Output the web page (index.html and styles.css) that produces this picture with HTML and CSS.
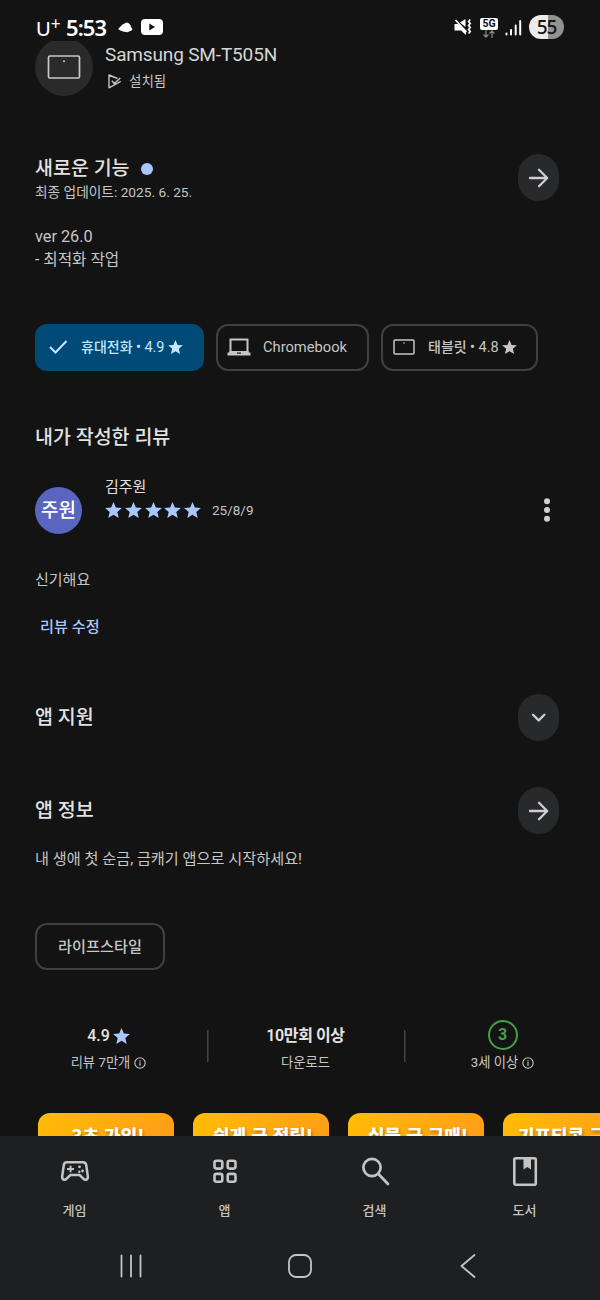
FILE: index.html
```html
<!DOCTYPE html>
<html lang="ko">
<head>
<meta charset="utf-8">
<title>앱 세부정보</title>
<link rel="stylesheet" href="styles.css">
</head>
<body>
<svg class="defs" width="0" height="0">
  <symbol id="star" viewBox="2 2 20 19"><path fill="currentColor" d="M12 17.270L18.180 21l-1.640-7.030L22 9.240l-7.190-.61L12 2 9.190 8.630 2 9.240l5.460 4.730L5.820 21z"/></symbol>
  <symbol id="arrow" viewBox="0 0 24 24"><path fill="none" stroke="currentColor" stroke-width="2.300" stroke-linecap="round" stroke-linejoin="round" d="M3 12h17M12 3.800l8.200 8.200-8.200 8.200"/></symbol>
  <symbol id="info" viewBox="0 0 12 12"><circle cx="6" cy="6" r="5.200" fill="none" stroke="currentColor" stroke-width="1.100"/><path stroke="currentColor" stroke-width="1.200" d="M6 5.300v3.400M6 3.200v1.200"/></symbol>
</svg>

<header class="status">
  <div class="status-left">
    <span class="carrier">U<sup>+</sup></span>
    <span class="clock">5:53</span>
    <svg class="ico-cloud" width="17" height="13" viewBox="0 0 18 14"><path fill="#fff" d="M1 8.500L5.500 4 10 1.500c3 .5 4.500 2 5 5l1.500 2.500c-1 2.200-3.500 1.800-5 3.200-3-.7-7.500-1-10.500-3.700z"/></svg>
    <svg width="22" height="16" viewBox="0 0 22 16"><rect width="22" height="16" rx="4" fill="#fff"/><path fill="#151515" d="M8.300 4.600v6.800L14 8z"/></svg>
  </div>
  <div class="status-right">
    <svg width="18" height="18" viewBox="0 0 18 18"><path fill="#fff" d="M.5 6H4l2 1 6 6v4l-5-4.500H.5zM6 4.500L11.500 1v8z"/><path fill="none" stroke="#fff" stroke-width="1.700" d="M1.500 2l11 12M16.200 1.500l-1.600 2 1.600 2-1.600 2 1.600 2-1.600 2 1.600 2-1.600 2"/></svg>
    <div class="net"><b>5G</b><svg width="12" height="8" viewBox="0 0 12 8"><path fill="none" stroke="#858585" stroke-width="1.300" d="M3 0v7M.5 4.500L3 7l2.500-2.500M9 8V1M6.500 3.500L9 1l2.500 2.500"/></svg></div>
    <svg class="ico-signal" width="17" height="17" viewBox="0 0 17 17"><path stroke="#fff" stroke-width="2" stroke-linecap="round" d="M1.500 14.500v1M6 11v4.500M10.700 6.500v9M15.200 2v13.500"/></svg>
    <span class="battery">55</span>
  </div>
</header>

<main class="page">
  <section class="device">
    <div class="device-icon"><svg width="34" height="24" viewBox="0 0 34 24"><rect x="1.500" y="1" width="31" height="22" rx="1.500" fill="none" stroke="#c8c8c8" stroke-width="1.700"/><circle cx="17" cy="6.300" r="1" fill="#c8c8c8"/></svg></div>
    <div>
      <div class="device-name">Samsung SM-T505N</div>
      <div class="device-state"><svg width="14" height="15" viewBox="0 0 14 15"><path fill="none" stroke="#c4c4c4" stroke-width="1.400" stroke-linejoin="round" d="M9.500 4.500L1 1v12.800L12.700 7.300M3.800 6.700l2.500 2.800 6-5.500"/></svg>설치됨</div>
    </div>
  </section>

  <section class="row news">
    <div>
      <h2 class="news-title">새로운 기능<i class="dot"></i></h2>
      <p class="updated">최종 업데이트: 2025. 6. 25.</p>
    </div>
    <button class="round"><svg width="24" height="24"><use href="#arrow"/></svg></button>
  </section>
  <p class="changes"><span class="version">ver 26.0</span><br>- 최적화 작업</p>

  <nav class="chips">
    <div class="chip chip-on"><svg class="ico-check" width="19" height="16" viewBox="0 0 19 16"><path fill="none" stroke="currentColor" stroke-width="2" d="M1 8l5.500 5.500L17.500 2"/></svg><span>휴대전화 • <i>4.9</i></span><svg width="15" height="14"><use href="#star"/></svg></div>
    <div class="chip chip-book"><svg width="24" height="18" viewBox="0 0 24 18"><path fill="none" stroke="currentColor" stroke-width="2" d="M3.500 15V1.500h17V15"/><path fill="currentColor" d="M.5 14.500h23v3H.5zM2.500 13h19v2h-19z"/><path fill="#131313" d="M10 14.500h4v1.200h-4z"/></svg><span>Chromebook</span></div>
    <div class="chip chip-tablet"><svg width="22" height="16" viewBox="0 0 22 16"><rect x="1" y="1" width="20" height="14" rx="1" fill="none" stroke="currentColor" stroke-width="1.500"/><circle cx="11" cy="4" r=".8" fill="currentColor"/></svg><span>태블릿 • <i>4.8</i></span><svg width="15" height="14"><use href="#star"/></svg></div>
  </nav>

  <h2 class="mine">내가 작성한 리뷰</h2>
  <section class="review">
    <div class="avatar">주원</div>
    <div class="review-meta">
      <div class="reviewer">김주원</div>
      <div class="stars">
        <svg width="17" height="16"><use href="#star"/></svg><svg width="17" height="16"><use href="#star"/></svg><svg width="17" height="16"><use href="#star"/></svg><svg width="17" height="16"><use href="#star"/></svg><svg width="17" height="16"><use href="#star"/></svg>
        <time>25/8/9</time>
      </div>
    </div>
    <svg class="more" width="8" height="24" viewBox="0 0 8 24"><g fill="#d0d0d0"><circle cx="4" cy="3.200" r="3"/><circle cx="4" cy="12" r="3"/><circle cx="4" cy="20.800" r="3"/></g></svg>
  </section>
  <p class="comment">신기해요</p>
  <a class="edit">리뷰 수정</a>

  <section class="row support">
    <h2>앱 지원</h2>
    <button class="round"><svg width="16" height="10" viewBox="0 0 16 10"><path fill="none" stroke="currentColor" stroke-width="2.300" stroke-linecap="round" stroke-linejoin="round" d="M2 1.700L7.700 7.400 13.400 1.700"/></svg></button>
  </section>
  <section class="row about">
    <h2>앱 정보</h2>
    <button class="round"><svg width="24" height="24"><use href="#arrow"/></svg></button>
  </section>
  <p class="summary">내 생애 첫 순금, 금캐기 앱으로 시작하세요!</p>
  <div class="tag">라이프스타일</div>

  <section class="stats">
    <div class="stat"><div class="stat-top"><span>4.9</span><svg width="17" height="16"><use href="#star"/></svg></div><div class="stat-label">리뷰 7만개<svg width="12" height="12"><use href="#info"/></svg></div></div>
    <div class="stat"><div class="stat-top stat-count">10만회 이상</div><div class="stat-label">다운로드</div></div>
    <div class="stat"><div class="stat-top"><b class="age">3</b></div><div class="stat-label">3세 이상<svg width="12" height="12"><use href="#info"/></svg></div></div>
  </section>

  <section class="shots">
    <div class="shot">3초 가입!</div>
    <div class="shot">쉽게 금 적립!</div>
    <div class="shot">실물 금 구매!</div>
    <div class="shot shot-last">기프티콘 구매!</div>
  </section>
</main>

<footer class="bottom">
  <nav class="tabs">
    <div class="tab"><svg width="32" height="34" viewBox="0 0 32 34"><path fill="none" stroke="currentColor" stroke-width="2.500" stroke-linejoin="round" d="M7.800 8.300h16.400c1.900 0 2.700 1 3 2.700l1.600 11.200c.4 3.500-2.300 4.600-4.500 2.400L20.600 21h-9.200l-3.700 3.600c-2.200 2.200-4.900 1.100-4.500-2.400L4.800 11c.3-1.700 1.100-2.700 3-2.700z"/><path stroke="currentColor" stroke-width="2" d="M8 15h7M11.500 11.700v6.600"/><g fill="currentColor"><circle cx="20.500" cy="12.800" r="1.400"/><circle cx="23.500" cy="17" r="1.400"/><circle cx="20.300" cy="17.800" r="1.200"/></g></svg><span>게임</span></div>
    <div class="tab"><svg width="32" height="34" viewBox="0 0 32 34"><g fill="none" stroke="currentColor" stroke-width="2.600"><rect x="5.500" y="6.800" width="7.800" height="7.800" rx="2"/><rect x="18.700" y="6.800" width="7.800" height="7.800" rx="2"/><rect x="5.500" y="19.900" width="7.800" height="7.800" rx="2"/><rect x="18.700" y="19.900" width="7.800" height="7.800" rx="2"/></g></svg><span>앱</span></div>
    <div class="tab"><svg width="32" height="34" viewBox="0 0 32 34"><g fill="none" stroke="currentColor" stroke-width="2.700" stroke-linecap="round"><circle cx="13" cy="13.500" r="8.600"/><path d="M19.200 19.800L29 30"/></g></svg><span>검색</span></div>
    <div class="tab"><svg width="32" height="34" viewBox="0 0 32 34"><rect x="5.300" y="4.300" width="21.500" height="26.500" rx="1.500" fill="none" stroke="currentColor" stroke-width="2.600"/><path fill="currentColor" d="M14.500 4h7.500v11.500l-3.750-2.500-3.750 2.500z"/></svg><span>도서</span></div>
  </nav>
  <nav class="system">
    <svg width="24" height="24" viewBox="0 0 24 24"><path stroke="currentColor" stroke-width="1.800" stroke-linecap="round" d="M2.500 1.500v21M12 1.500v21M21.500 1.500v21"/></svg>
    <svg width="24" height="24" viewBox="0 0 24 24"><rect x="1" y="1" width="22" height="22" rx="7" fill="none" stroke="currentColor" stroke-width="1.800"/></svg>
    <svg width="24" height="24" viewBox="0 0 24 24"><path fill="none" stroke="currentColor" stroke-width="1.800" stroke-linecap="round" stroke-linejoin="round" d="M18.500 1L5.500 12l13 11"/></svg>
  </nav>
</footer>
</body>
</html>
```
FILE: styles.css
```css
* { box-sizing: border-box; margin: 0; padding: 0; }
body {
  width: 600px; height: 1300px; overflow: hidden;
  display: flex; flex-direction: column;
  background: #131313; color: #c6c6c6;
  font-family: Roboto, "Noto Sans CJK KR", sans-serif;
  font-size: 14px; white-space: nowrap;
}
svg { display: block; flex: none; }
.defs { position: absolute; }
h2 { font-size: 19.500px; line-height: 28px; font-weight: 500; color: #e2e2e2; }

.status { height: 41px; padding: 14px 36px 0 36px; display: flex; justify-content: space-between; color: #fff; flex: none; }
.status-left, .status-right { display: flex; align-items: center; height: 26px; }
.carrier { font: 400 20px/26px Lato, sans-serif; width: 30px; padding-top: 2px; }
.carrier sup { font-size: 17px; line-height: 0; vertical-align: 6px; }
.clock { font: 600 22px/26px "Noto Sans", sans-serif; letter-spacing: -.9px; width: 51px; padding-bottom: 1px; }
.ico-cloud { margin-right: 7px; }
.net { width: 18px; margin: 2px 7px 0 8px; display: flex; flex-direction: column; align-items: center; }
.net b { width: 18px; height: 12px; border-radius: 2px; background: #fff; color: #111; font: 700 10.500px/12px Roboto, sans-serif; text-align: center; }
.battery { width: 35px; height: 24px; margin-left: 7px; border-radius: 12px; background: linear-gradient(90deg, #ececec 55%, #929292 55%); color: #151515; font: 500 19px/24px "Noto Sans", sans-serif; letter-spacing: -1px; text-align: center; }

.page { flex: none; height: 1095px; overflow: hidden; padding-left: 35px; }
.device { display: flex; gap: 12px; height: 58px; margin-top: -3px; }
.device-icon { width: 58px; height: 58px; border-radius: 50%; background: #2a2a2a; display: grid; place-items: center; }
.device-name { font-size: 19px; letter-spacing: -.15px; line-height: 26px; color: #d5d5d5; padding-top: 4px; }
.device-state { display: flex; gap: 7px; align-items: center; height: 26px; font-size: 13.500px; line-height: 20px; padding-left: 3px; }

.row { display: flex; justify-content: space-between; align-items: center; height: 47px; padding-right: 41px; }
.news { margin-top: 58px; }
.news-title { display: flex; align-items: center; gap: 11px; margin-top: 2px; line-height: 27px; }
.dot { width: 12px; height: 12px; border-radius: 50%; background: #a8c7fa; }
.updated { font-size: 13.700px; line-height: 20px; }
.round { width: 41px; height: 47px; border: 0; border-radius: 21px; background: #28292b; color: #cfcfcf; display: grid; place-items: center; }
.changes { margin-top: 24px; font-size: 15.700px; line-height: 23px; height: 46px; }
.version { font-size: 16.300px; }

.chips { display: flex; gap: 12px; margin-top: 53px; }
.chip { height: 47px; padding-bottom: 1px; border: 2px solid #404040; border-radius: 12px; display: flex; align-items: center; font-size: 14px; font-weight: 500; line-height: 20px; }
.chip i { font-style: normal; font-weight: 400; font-size: 14.500px; }
.chip-on { width: 169px; padding-left: 12px; background: #004a77; border-color: #004a77; color: #c2e7ff; }
.chip-on span { margin: 0 3px 0 13px; }
.chip-book { width: 153px; padding-left: 9px; gap: 12px; font-size: 14.700px; font-weight: 400; }
.chip-tablet { width: 157px; padding-left: 10px; }
.chip-tablet span { margin: 0 3px 0 13px; }

.mine { margin-top: 53px; }
.review { display: flex; margin-top: 23px; height: 60px; }
.avatar { width: 47px; height: 47px; margin-top: 12px; border-radius: 50%; background: #5965c0; color: #fff; font-size: 19px; font-weight: 500; line-height: 47px; text-align: center; }
.review-meta { margin-left: 23px; flex: 1; }
.reviewer { height: 25px; font-size: 15px; line-height: 24px; color: #e0e0e0; }
.stars { display: flex; gap: 2.800px; align-items: center; height: 20px; color: #a8c7fa; }
.stars time { margin-left: 8px; font-size: 13.500px; color: #c6c6c6; }
.more { margin: 23px 49px 0 0; }
.comment { margin-top: 33px; font-size: 15px; line-height: 24px; }
.edit { display: block; margin: 23px 0 0 5px; font-size: 15.200px; font-weight: 500; line-height: 24px; color: #a8c7fa; }

.support { margin-top: 55px; }
.about { margin-top: 46px; }
.summary { margin-top: 13px; font-size: 15.200px; line-height: 24px; }
.tag { width: 130px; height: 47px; margin-top: 52px; border: 2px solid #404040; border-radius: 12px; font-size: 15.200px; font-weight: 500; line-height: 44px; text-align: center; }

.stats { display: grid; grid-template-columns: repeat(3, 197px); margin: 50px 0 0 -25px; height: 56px; }
.stat { display: flex; flex-direction: column; align-items: center; }
.stat + .stat { background: linear-gradient(#444, #444) 0 10px / 1.500px 32px no-repeat; }
.stat-top { display: flex; align-items: center; height: 30px; gap: 3px; font-size: 16px; line-height: 28px; font-weight: 500; color: #e4e4e4; }
.stat-top span { padding-top: 1px; }
.stat-count { padding-top: 1px; letter-spacing: -.4px; font-weight: 600; }
.stat-top svg { color: #a8c7fa; margin-top: 1px; }
.stat-label { display: flex; align-items: center; gap: 4px; height: 25px; font-size: 13.300px; line-height: 20px; }
.age { width: 30px; height: 30px; border: 2px solid #43a047; border-radius: 50%; color: #43a047; text-align: center; line-height: 26px; font-weight: 700; }

.shots { display: flex; gap: 19px; margin: 37px 0 0 3px; }
.shot { flex: none; width: 136px; height: 240px; padding: 8px 0 0 4px; border-radius: 12px; background: linear-gradient(135deg, #ffbd05 0, #ff9d18 110px); color: #fff; font-family: "Noto Sans CJK KR", sans-serif; font-size: 18px; line-height: 28px; font-weight: 900; text-align: center; text-shadow: 1px 2px 3px #8a5200aa; }
.shot-last { text-align: left; padding-left: 15px; }

.bottom { flex: 1; background: #1e1f21; color: #c4c4c4; }
.tabs { display: grid; grid-template-columns: repeat(4, 150px); padding-top: 18px; height: 104px; }
.tab { display: flex; flex-direction: column; align-items: center; font-size: 13px; font-weight: 500; line-height: 20px; gap: 13px; }
.tab span { margin-right: 1px; }
.system { display: flex; gap: 144.500px; padding: 14px 0 0 119px; }
```
